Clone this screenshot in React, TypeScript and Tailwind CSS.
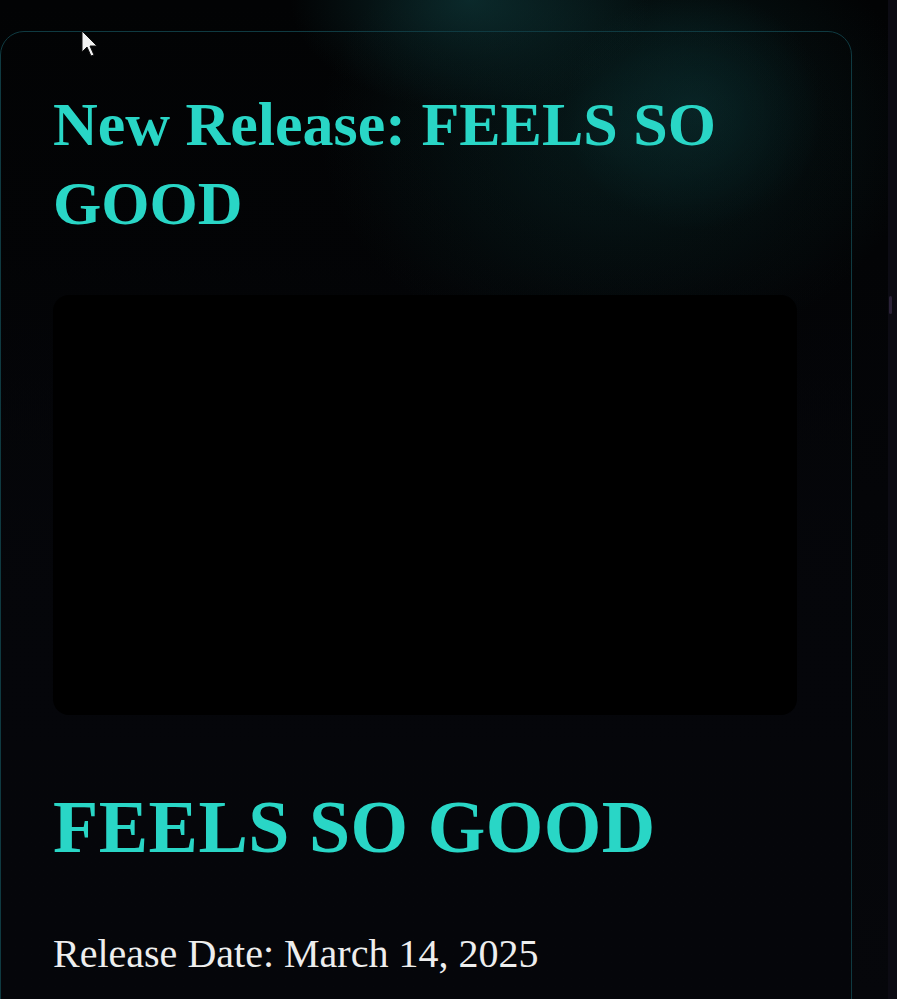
import React from "react";

export default function App() {
  return (
    <div className="relative w-[897px] h-[999px] overflow-hidden bg-[linear-gradient(to_bottom,#020304,#040508_50%,#06070b)]">
      {/* background glows */}
      <div className="pointer-events-none absolute inset-0 bg-[radial-gradient(ellipse_300px_230px_at_620px_130px,rgba(12,52,52,0.55),transparent_100%)]" />
      <div className="pointer-events-none absolute inset-0 bg-[radial-gradient(ellipse_180px_110px_at_470px_0px,rgba(16,62,64,0.6),transparent_100%)]" />
      <div className="pointer-events-none absolute inset-0 bg-[radial-gradient(ellipse_130px_120px_at_695px_110px,rgba(12,58,60,0.55),transparent_100%)]" />

      <div className="relative flex h-full w-full">
        <div className="flex-1 pt-[31px]">
          <div
            className="w-[852px] rounded-[24px] border border-[#0f3a41] bg-[linear-gradient(to_bottom,rgba(2,3,4,0.15),rgba(2,3,4,0.2)_22%,rgba(5,6,10,0.92)_55%,#05060a)] px-[52px] pt-[53px] pb-[60px]"
            style={{ fontFamily: '"Liberation Serif", "Times New Roman", serif' }}
          >
            <h1 className="text-[62px] leading-[79px] font-bold text-[#29d6c6]">
              New Release: FEELS SO GOOD
            </h1>
            <div className="mt-[52px] h-[420px] w-[744px] rounded-2xl bg-black" />
            <h2 className="mt-[68px] text-[74px] leading-[89px] font-bold tracking-[0.5px] text-[#29d6c6]">
              FEELS SO GOOD
            </h2>
            <p className="mt-[52px] text-[40px] leading-[60px] text-[#eeeeee]">
              Release Date: March 14, 2025
            </p>
          </div>
        </div>
        <div className="w-[9px] bg-[#0c0b13] relative">
          <div className="absolute left-[1px] top-[296px] h-[18px] w-[3px] rounded-full bg-[#2a2238]" />
        </div>
      </div>

      {/* mouse cursor */}
      <svg
        className="pointer-events-none absolute left-[81px] top-[30px]"
        width="24"
        height="38"
        viewBox="0 0 24 38"
      >
        <path
          d="M1 1 L1 22 L6 17 L10 26 L13 25 L9 16 L16 16 Z"
          fill="#f2f2f2"
          stroke="#111"
          strokeWidth="1"
        />
      </svg>
    </div>
  );
}
